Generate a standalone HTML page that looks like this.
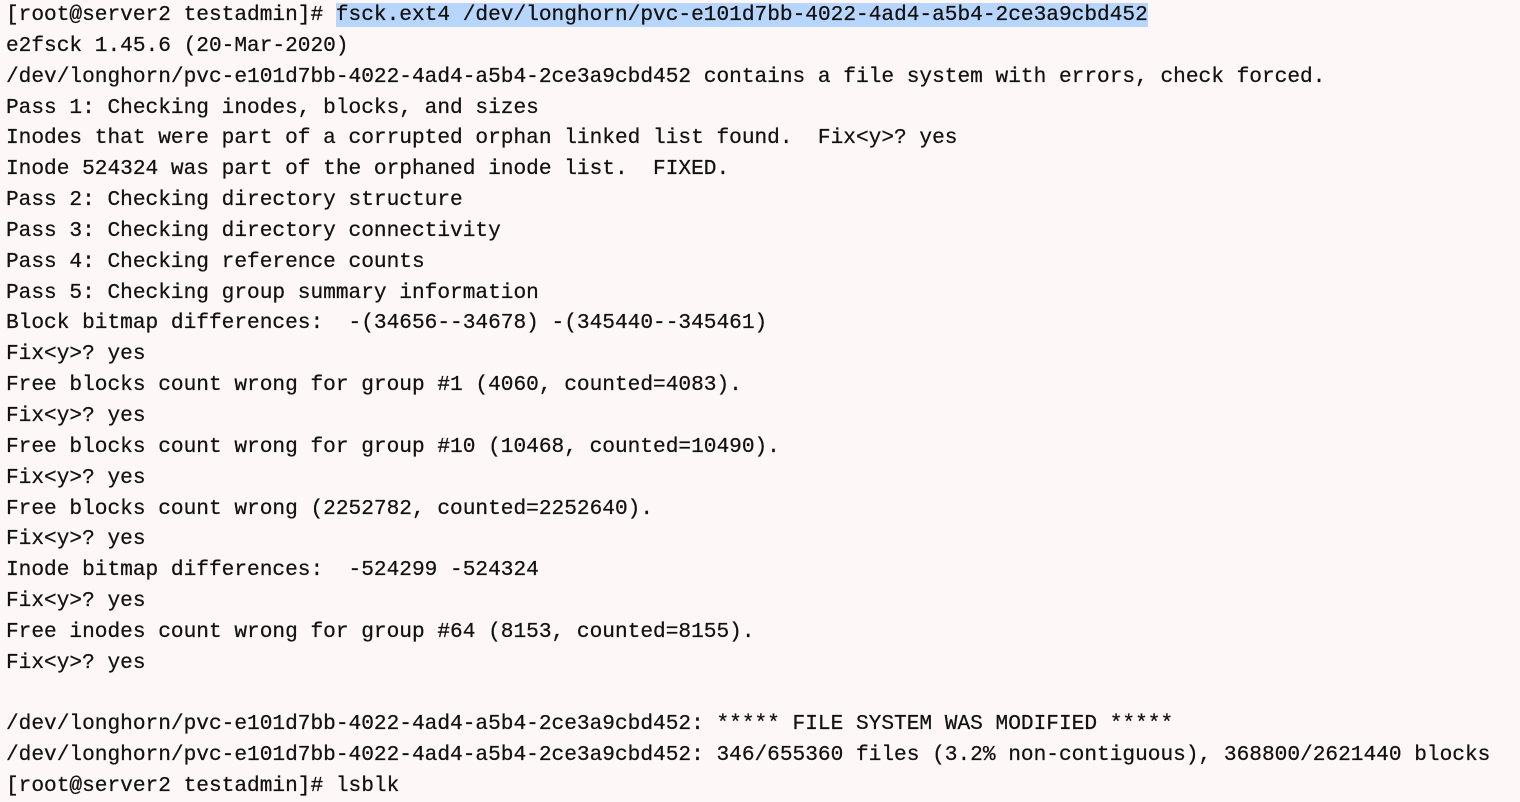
<!DOCTYPE html>
<html><head><style>
html,body{margin:0;padding:0;background:#fdf7f7;width:1520px;height:778px;overflow:hidden}
pre{margin:0;position:absolute;left:6px;top:0px;font-family:"Liberation Mono","DejaVu Sans Mono",monospace;font-size:21.15px;line-height:30.85px;color:#111;white-space:pre;-webkit-text-stroke:0.25px #111}
.hl{background:#b8d6fb}
</style></head><body>
<pre>[root@server2 testadmin]# <span class="hl">fsck.ext4 /dev/longhorn/pvc-e101d7bb-4022-4ad4-a5b4-2ce3a9cbd452</span>
e2fsck 1.45.6 (20-Mar-2020)
/dev/longhorn/pvc-e101d7bb-4022-4ad4-a5b4-2ce3a9cbd452 contains a file system with errors, check forced.
Pass 1: Checking inodes, blocks, and sizes
Inodes that were part of a corrupted orphan linked list found.  Fix&lt;y&gt;? yes
Inode 524324 was part of the orphaned inode list.  FIXED.
Pass 2: Checking directory structure
Pass 3: Checking directory connectivity
Pass 4: Checking reference counts
Pass 5: Checking group summary information
Block bitmap differences:  -(34656--34678) -(345440--345461)
Fix&lt;y&gt;? yes
Free blocks count wrong for group #1 (4060, counted=4083).
Fix&lt;y&gt;? yes
Free blocks count wrong for group #10 (10468, counted=10490).
Fix&lt;y&gt;? yes
Free blocks count wrong (2252782, counted=2252640).
Fix&lt;y&gt;? yes
Inode bitmap differences:  -524299 -524324
Fix&lt;y&gt;? yes
Free inodes count wrong for group #64 (8153, counted=8155).
Fix&lt;y&gt;? yes

/dev/longhorn/pvc-e101d7bb-4022-4ad4-a5b4-2ce3a9cbd452: ***** FILE SYSTEM WAS MODIFIED *****
/dev/longhorn/pvc-e101d7bb-4022-4ad4-a5b4-2ce3a9cbd452: 346/655360 files (3.2% non-contiguous), 368800/2621440 blocks
[root@server2 testadmin]# lsblk</pre>
</body></html>
